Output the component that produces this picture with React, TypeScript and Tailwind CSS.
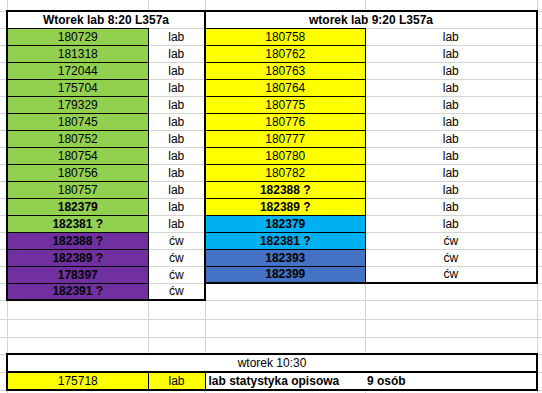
import React from "react";

const GREEN = "bg-[#92d050]";
const PURPLE = "bg-[#7030a0]";
const YELLOW = "bg-[#ffff00]";
const CYAN = "bg-[#00b0f0]";
const BLUE = "bg-[#4472c4]";

type Entry = { id: string; kind: string; bold?: boolean; bg: string };

const left: Entry[] = [
  { id: "180729", kind: "lab", bg: GREEN },
  { id: "181318", kind: "lab", bg: GREEN },
  { id: "172044", kind: "lab", bg: GREEN },
  { id: "175704", kind: "lab", bg: GREEN },
  { id: "179329", kind: "lab", bg: GREEN },
  { id: "180745", kind: "lab", bg: GREEN },
  { id: "180752", kind: "lab", bg: GREEN },
  { id: "180754", kind: "lab", bg: GREEN },
  { id: "180756", kind: "lab", bg: GREEN },
  { id: "180757", kind: "lab", bg: GREEN },
  { id: "182379", kind: "lab", bold: true, bg: GREEN },
  { id: "182381 ?", kind: "lab", bold: true, bg: GREEN },
  { id: "182388 ?", kind: "ćw", bold: true, bg: PURPLE },
  { id: "182389 ?", kind: "ćw", bold: true, bg: PURPLE },
  { id: "178397", kind: "ćw", bold: true, bg: PURPLE },
  { id: "182391 ?", kind: "ćw", bold: true, bg: PURPLE },
];

const right: Entry[] = [
  { id: "180758", kind: "lab", bg: YELLOW },
  { id: "180762", kind: "lab", bg: YELLOW },
  { id: "180763", kind: "lab", bg: YELLOW },
  { id: "180764", kind: "lab", bg: YELLOW },
  { id: "180775", kind: "lab", bg: YELLOW },
  { id: "180776", kind: "lab", bg: YELLOW },
  { id: "180777", kind: "lab", bg: YELLOW },
  { id: "180780", kind: "lab", bg: YELLOW },
  { id: "180782", kind: "lab", bg: YELLOW },
  { id: "182388 ?", kind: "lab", bold: true, bg: YELLOW },
  { id: "182389 ?", kind: "lab", bold: true, bg: YELLOW },
  { id: "182379", kind: "lab", bold: true, bg: CYAN },
  { id: "182381 ?", kind: "ćw", bold: true, bg: CYAN },
  { id: "182393", kind: "ćw", bold: true, bg: BLUE },
  { id: "182399", kind: "ćw", bold: true, bg: BLUE },
];

const cell = "p-0 border border-[#d4d4d4] text-center align-middle whitespace-nowrap overflow-hidden";
const edge = "p-0 border border-[#d4d4d4] border-l-0";
const tail = "p-0 border border-[#d4d4d4]";

function EmptyRow({ h = "h-[17px]" }: { h?: string }) {
  return (
    <tr className={h}>
      <td className={edge} />
      <td className={cell} />
      <td className={cell} />
      <td className={cell} />
      <td className={cell} />
      <td className={tail} />
    </tr>
  );
}

export default function App() {
  return (
    <div className="h-[393px] w-[542px] overflow-hidden bg-white text-[12px] leading-none text-black font-['Liberation_Sans',Arial,sans-serif]">
      <table className="w-[600px] table-fixed border-collapse">
        <colgroup>
          <col className="w-[7px]" />
          <col className="w-[141px]" />
          <col className="w-[57px]" />
          <col className="w-[160px]" />
          <col className="w-[172px]" />
          <col className="w-[63px]" />
        </colgroup>
        <tbody>
          <tr className="h-[11px]">
            <td className={`${edge} border-t-0`} />
            <td className={`${cell} border-t-0`} />
            <td className={`${cell} border-t-0`} />
            <td className={`${cell} border-t-0`} />
            <td className={`${cell} border-t-0`} />
            <td className={`${tail} border-t-0`} />
          </tr>

          <tr className="h-[17px]">
            <td className={edge} />
            <td colSpan={2} className={`${cell} border-2 border-b-0 border-black font-bold`}>
              Wtorek lab 8:20 L357a
            </td>
            <td colSpan={2} className={`${cell} border-2 border-b-0 border-black font-bold`}>
              wtorek lab 9:20 L357a
            </td>
            <td className={tail} />
          </tr>

          {left.map((l, i) => {
            const r = right[i];
            const lastL = i === left.length - 1;
            const lastR = i === right.length - 1;
            return (
              <tr key={l.id + i} className="h-[17px]">
                <td className={edge} />
                <td
                  className={`${cell} ${l.bg} border-black border-l-2 ${lastL ? "border-b-2" : ""} ${
                    l.bold ? "font-bold" : ""
                  }`}
                >
                  {l.id}
                </td>
                <td className={`${cell} border-r-2 border-r-black ${lastL ? "border-b-2 border-b-black" : ""}`}>
                  {l.kind}
                </td>
                {r ? (
                  <>
                    <td
                      className={`${cell} ${r.bg} border-black ${lastR ? "border-b-2" : ""} ${
                        r.bold ? "font-bold" : ""
                      }`}
                    >
                      {r.id}
                    </td>
                    <td className={`${cell} border-r-2 border-r-black ${lastR ? "border-b-2 border-b-black" : ""}`}>
                      {r.kind}
                    </td>
                  </>
                ) : (
                  <>
                    <td className={cell} />
                    <td className={cell} />
                  </>
                )}
                <td className={tail} />
              </tr>
            );
          })}

          <EmptyRow h="h-[19px]" />
          <EmptyRow h="h-[18px]" />
          <EmptyRow />

          <tr className="h-[18px]">
            <td className={edge} />
            <td colSpan={4} className={`${cell} border-2 border-black bg-white`}>
              wtorek 10:30
            </td>
            <td className={tail} />
          </tr>
          <tr className="h-[18px]">
            <td className={edge} />
            <td className={`${cell} ${YELLOW} border-black border-l-2 border-b-2`}>175718</td>
            <td className={`${cell} ${YELLOW} border-black border-b-2`}>lab</td>
            <td className={`${cell} border-black border-y-2 border-r-0 bg-white pl-[3px] text-left font-bold`}>
              lab statystyka opisowa
            </td>
            <td className={`${cell} border-black border-y-2 border-r-2 border-l-0 bg-white pl-[2px] text-left font-bold`}>
              9 osób
            </td>
            <td className={tail} />
          </tr>
          <EmptyRow />
        </tbody>
      </table>
    </div>
  );
}
